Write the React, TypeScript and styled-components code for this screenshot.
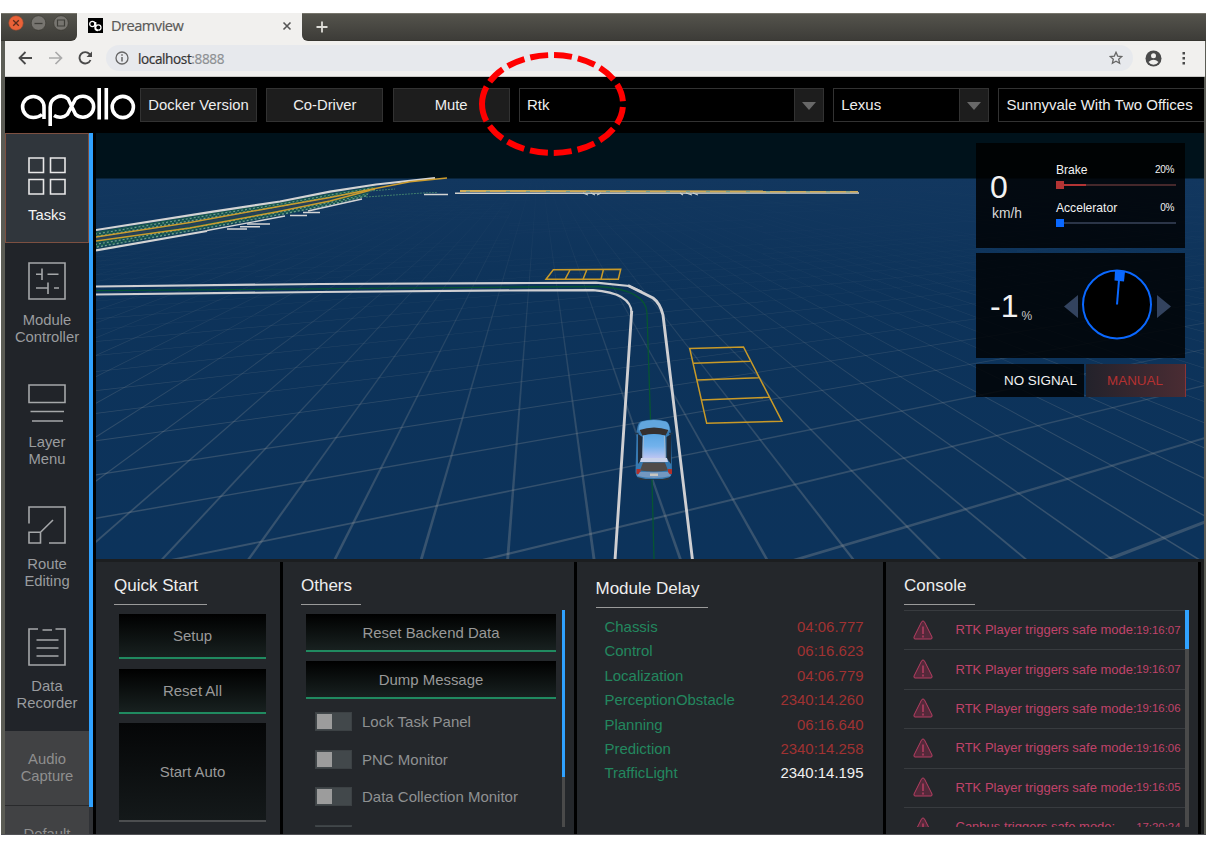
import React from 'react';
import styled, { createGlobalStyle, css } from 'styled-components';

const Global = createGlobalStyle`
  * { box-sizing: border-box; }
  body { margin: 0; background: #fff; font-family: 'Liberation Sans', Arial, sans-serif; }
`;

/* ---------- window frame ---------- */
const Page = styled.div`
  position: relative; width: 1206px; height: 845px; padding: 13px 0 0 1px; overflow: hidden; background: #fff;
`;
const Window = styled.div`
  width: 1205px; height: 822px; display: flex; flex-direction: column; overflow: hidden;
  background: #5b5c55; border-bottom: 1px solid #515256;
`;
const TitleBar = styled.div`
  height: 28px; flex: none; display: flex; background: #f1f0ee;
`;
const darkBar = css`
  background: linear-gradient(#54534c, #3d3c38); border-top: 1px solid #77756c; border-bottom: 1px solid #35342f;
`;
const WindowControls = styled.div`
  ${darkBar} width: 76px; padding: 1px 0 0 7px; display: flex; gap: 7px; border-bottom-right-radius: 6px;
`;
const TitleRest = styled.div`
  ${darkBar} flex: 1; padding: 5px 0 0 14px; border-bottom-left-radius: 6px;
`;
const BrowserTab = styled.div`
  width: 225px; display: flex; align-items: center; padding: 0 10px 3px 11px; background: #f1f0ee;
  font: 14.6px 'Open Sans', 'Noto Sans', sans-serif; color: #5a5a58;
`;
const TabName = styled.span`flex: 1; padding-left: 8px; margin-top: -2px; letter-spacing: -0.5px; -webkit-text-stroke: .2px #5a5a58;`;
const AddressRow = styled.div`
  height: 36px; flex: none; display: flex; align-items: center; margin: 0 1px 0 4px; background: #f1f0ee;
  border-bottom: 1px solid #c9c8c5; padding: 0 0 1px 13px;
`;
const NavIcons = styled.div`display: flex; gap: 15px; width: 88px;`;
const UrlBox = styled.div`
  width: 1027px; height: 26px; border-radius: 13px; background: #e7e9ed; display: flex; align-items: center;
  padding: 0 10px 0 9px; font: 13.6px 'Open Sans', 'Noto Sans', sans-serif; color: #333; letter-spacing: -0.4px;
`;
const Url = styled.span`flex: 1; padding-left: 9px; -webkit-text-stroke: .2px; span { color: #8d9093; }`;
const ChromeIcons = styled.div`display: flex; align-items: center; gap: 13px; padding-left: 12px;`;

/* ---------- header ---------- */
const Dream = styled.div`
  flex: 1; min-height: 0; margin: 0 2px 0 4px; display: flex; flex-direction: column; background: #000; overflow: hidden;
`;
const Header = styled.header`
  height: 56px; flex: none; display: flex; align-items: center; overflow: hidden; padding-left: 15px;
  > svg { flex: none; }
`;
const HeaderItems = styled.div`display: flex; gap: 9.300px; flex: none;`;
const HeaderButton = styled.button`
  width: 117px; height: 34px; flex: none; padding: 0; border: 1px solid #323232; background: #1d1d1d; color: #eee;
  font: 14.8px 'Liberation Sans', sans-serif;
`;
const Select = styled.div<{ $w: number }>`
  width: ${p => p.$w}px; height: 34px; flex: none; display: flex; align-items: center; justify-content: space-between;
  border: 1px solid #323232; padding: 0 0 1px 7px; color: #eee; font-size: 15px; white-space: nowrap;
`;
const SelectArrow = styled.div`
  width: 29px; height: 32px; margin-bottom: -1px; background: #1d1d1d; border-left: 1px solid #323232; display: grid; place-items: center;
  &::after { content: ''; border: 7px solid transparent; border-top: 8px solid #686868; border-bottom: 0; margin-top: 2px; }
`;

/* ---------- sidebar ---------- */
const Body = styled.div`flex: 1; min-height: 0; display: flex;`;
const Sidebar = styled.nav`width: 84px; flex: none; overflow: hidden; background: #212429; display: flex; flex-direction: column;`;
const SideItem = styled.div<{ $active?: boolean }>`
  height: ${p => (p.$active ? 110 : 122)}px; flex: none; padding-top: ${p => (p.$active ? 23 : 19)}px;
  display: flex; flex-direction: column; align-items: center; gap: 12px; text-align: center;
  color: ${p => (p.$active ? '#f4f4f4' : '#9a9c9f')}; font-size: 14.8px; line-height: 17px;
  ${p => p.$active && css`background: #30363c; border: 1px solid #7d5041;`}
  svg { flex: none; stroke: ${p => (p.$active ? '#e8e8e8' : '#a5a7a9')}; }
  span { width: 76px; }
`;
const SideMode = styled.div`
  height: 75px; flex: none; background: #414244; border-bottom: 1px solid #292a2c; color: #8f8f8f; font-size: 14.8px; line-height: 17px;
  display: flex; align-items: center; justify-content: center; text-align: center;
  span { width: 60px; }
`;
const SideMore = styled(SideMode)`align-items: flex-start; padding-top: 20px; border: 0;`;
const Track = styled.div<{ $w: number; $fill: number; $bg: string }>`
  width: ${p => p.$w}px; flex: none;
  background: linear-gradient(#30a2ff, #30a2ff) no-repeat 0 0 / 100% ${p => p.$fill}px ${p => p.$bg};
`;

/* ---------- main ---------- */
const Main = styled.main`width: 1108px; margin-left: 3px; flex: none; display: flex; flex-direction: column;`;
const Scene = styled.section`position: relative; height: 426px; flex: none; svg { display: block; }`;
const Hud = styled.div`
  position: absolute; left: 880px; top: 10px; width: 210px; display: flex; flex-direction: column; gap: 5.500px; color: #f2f2f2;
`;
const Meter = styled.div`width: 209px; height: 104.800px; background: rgba(0, 0, 0, .82); display: flex;`;
const Speed = styled.div`width: 80px; padding: 26px 0 0 14px; font-size: 32px; line-height: 36px;
  small { display: block; font-size: 13.8px; line-height: 18px; padding-left: 2px; color: #d8d8d8; }`;
const Pedals = styled.div`width: 120px; padding-top: 20px; display: flex; flex-direction: column; gap: 6.500px;`;
const Pedal = styled.div`height: 31px; font-size: 12.1px; line-height: 14px;`;
const PedalText = styled.div`display: flex; justify-content: space-between; padding-right: 2px; small { font-size: 10px; letter-spacing: -.3px; }`;
const PedalBar = styled.div<{ $c: string; $dim: string; $fill: number }>`
  height: 8px; margin-top: 4px; display: flex; align-items: center;
  background: linear-gradient(90deg, ${p => p.$c} ${p => p.$fill}px, ${p => p.$dim} ${p => p.$fill}px) no-repeat 0 3px / 100% 2px;
  &::before { content: ''; width: 8px; height: 8px; background: ${p => p.$c}; }
`;
const Steering = styled.div`
  width: 88px; padding: 35px 0 0 14px; font-size: 32px; line-height: 36px; white-space: nowrap; display: flex; gap: 3px;
  small { font-size: 12px; padding-top: 10px; color: #c8c8c8; }
`;
const States = styled.div`display: flex; gap: 2px; height: 33px; font-size: 13.4px; line-height: 34px;`;
const Signal = styled.div`width: 108px; background: rgba(0, 0, 0, .82); text-align: right; padding-right: 7px;`;
const Mode = styled.div`
  width: 100px; color: #b43131; text-align: center; padding-right: 1px; border-right: 1px solid #8a3437;
  background: linear-gradient(90deg, #23222b, #4a2c33);
`;

const Panels = styled.div`flex: 1; min-height: 0; display: flex; gap: 3px; border-top: 3px solid #1c1e20; background: #000;`;
const Panel = styled.section<{ $w: number; $pt?: number; $pl?: number }>`
  width: ${p => p.$w}px; flex: none; background: #24272b; padding: ${p => p.$pt ?? 11}px 0 0 ${p => p.$pl ?? 18}px; overflow: hidden;
`;
const Gutter = styled.div`flex: 1; background: #1d1e1f;`;
const PanelTitle = styled.h2`
  margin: 0; width: max-content; height: 32px; padding-right: 9px; border-bottom: 1px solid #9a9a9a;
  font-size: 17px; font-weight: 400; line-height: 25px; color: #eee;
`;
const Command = styled.button<{ $w: number; $h: number; $off?: boolean }>`
  display: block; width: ${p => p.$w}px; height: ${p => p.$h}px; margin: 0 0 9px; padding: 0; border: 0;
  border-bottom: 2px solid ${p => (p.$off ? '#4c4e50' : '#208a60')};
  background: ${p => (p.$off ? 'linear-gradient(#050607, #14191a)' : 'linear-gradient(#000, #182120)')};
  color: #999; font: 14.95px 'Liberation Sans', sans-serif;
`;
const QuickList = styled.div`padding: 9px 0 0 5px; button { margin-bottom: 9.5px; }`;
const ScrollArea = styled.div`display: flex; height: 217px; margin-top: 5px; overflow: hidden;`;
const OtherList = styled.div`width: 261px; padding: 4px 0 0 5px;`;
const Toggles = styled.div`margin-top: -5px;`;
const Toggle = styled.div`
  display: flex; align-items: center; gap: 10px; height: 37.500px; padding-left: 9px; font-size: 15px; color: #8f9192;
  &::before {
    content: ''; width: 35px; height: 17px; flex: none; border: 1px solid #3c4144;
    background: linear-gradient(#9c9c9c, #9c9c9c) no-repeat 1px 1px / 15px 15px #42484b;
  }
`;
const DelayList = styled.div`padding: 7px 0 0 9px; width: 268px;`;
const Delay = styled.div<{ $white?: boolean }>`
  display: flex; justify-content: space-between; height: 24.4px; line-height: 24.4px; font-size: 14.95px; color: #23875f;
  b { font-weight: 400; color: ${p => (p.$white ? '#f0f0f0' : '#a03232')}; }
`;
const LogList = styled.div`width: 281px;`;
const LogRow = styled.div`
  height: 39.400px; border-top: 1px solid #383b3f; display: flex; align-items: center; padding: 0 4.500px 1px 9px; color: #c0436a;
  font-size: 13px; white-space: nowrap;
  span { width: 179px; margin-left: 22.500px; }
  time { flex: 1; font-size: 11.4px; display: flex; justify-content: flex-end; }
`;
const Marker = styled.svg`position: absolute; left: 470px; top: 44px;`;

/* ---------- drawings ---------- */
const Logo = () => (
  <svg width="120" height="44" viewBox="20 84 120 44" fill="none" stroke="#fff" strokeWidth="3.6">
    <path d="M44 120V108A10.700 10.500 0 1 0 33.300 118.500Q38.500 118.500 42 115.500" />
    <path d="M50.2 127V108A10.8 10.5 0 0 1 68 99.8L75.5 115.4A10.8 10.5 0 1 0 75.5 100L67.5 115.2A10.8 10.5 0 0 1 54 116.5" />
    <path d="M99.2 89V120.5M106.3 89V120.5" />
    <circle cx="122.8" cy="108" r="10.6" />
  </svg>
);

const sideIcons: Record<string, React.ReactNode> = {
  tasks: <path d="M1 1h14.5v14.5H1zM22.5 1H37v14.5H22.5zM1 22.500h14.500V37H1zM22.500 22.500H37V37H22.500z" />,
  module: <path d="M1 1h36v36H1zM8 12.200h6M14 6.500v11.500M19.500 12.200h11M8 26h12M20 20.500v11.500M26 26h5" />,
  layer: <path d="M1 1h36v17.500H1zM2.500 27.500h33.500M4 37h31" />,
  route: <path d="M1 17.500V1h36v36H21M1 26.200h11.500V37H1zM12.500 26.200L25 14" />,
  data: <path d="M10 1H1v36h36V1h-9.500M14.500 2h9.500M8.500 12h22M8.500 20h22M8.500 28h22" />,
};
const SideIcon = ({ name }: { name: string }) => (
  <svg width="38" height="38" viewBox="0 0 38 38" fill="none" strokeWidth="1.600">{sideIcons[name]}</svg>
);

const HORIZON = 155.5;
const BOTTOM = 560;
const across = (c: number) => 539 + c * (BOTTOM - HORIZON);
const Grid = () => {
  const half = 0.0036;
  const lines: string[] = [];
  for (let n = -60; n <= 60; n++) {
    const c = -0.0776 + n * 0.2139;
    lines.push(`539,${HORIZON} ${across(c - half)},${BOTTOM} ${across(c + half)},${BOTTOM}`);
  }
  for (let m = -45; m <= 8; m++) {
    const at = (x: number) => HORIZON + (403.5 / (2155 - x)) * (2155 - 90);
    const x = -135 + 311 * m;
    lines.push(`2155,${HORIZON} 90,${at(x - 4.800)} 90,${at(x + 4.800)}`);
  }
  return <g fill="url(#haze)">{lines.map((p, i) => <polygon key={i} points={p} />)}</g>;
};

const Car = () => (
  <g>
    <path d="M636.500 436q0-12 4-14.500q13-4 26 0q4 2.500 4.500 14.500l1 36q-1 6-6 7h-25q-5-1-5.500-7z" fill="#3779b0" />
    <path d="M638.500 430q0-7 4-8.500q11-3 23 0q4 1.500 4 8.500l-2 2q-13.500-5-27 0z" fill="#62a6de" />
    <path d="M634.500 433.500h4M669 433.500h4" stroke="#1f364d" strokeWidth="1.500" />
    <path d="M639.500 430q14.500-5 29 0l-3 5.500q-11-3-23 0z" fill="#35302f" />
    <path d="M638 434l4.500 3v21l-4.500 6zM671 434l-4.500 3v21l4.500 6z" fill="#202a38" />
    <path d="M643 435.500q11-3 22 0l.5 23h-23z" fill="url(#roof)" />
    <path d="M643.500 436l-.8 22M664.500 436l.8 22" stroke="#b0b9c6" strokeWidth=".8" />
    <path d="M641 458h26l1 4h-28z" fill="#c9d2ea" />
    <path d="M643 462.500h22l3 8q-14 2-28 0z" fill="#504b49" />
    <path d="M636.500 469h4v5h-4zM668 469h4v5h-4z" fill="#b1302b" />
    <path d="M640 472h28l3 4q-17 4-34 0z" fill="#7397c0" />
    <path d="M650 473.500h8v2.500h-8z" fill="#c9c6c0" />
    <path d="M637 477q17 5 34 0l-3 3h-28z" fill="#29333d" />
  </g>
);

const lanes = [0.1, 0.17, 0.24, 0.31, 0.66, 0.74, 0.82, 0.9];
const topEdge = [[96, 231], [213, 212], [280, 202], [330, 193], [376, 186]];
const lowEdge = [[96, 249], [213, 228.5], [285, 215], [330, 206], [365, 197]];
const lane = (t: number) =>
  topEdge.map(([x, y], i) => `${x + (lowEdge[i][0] - x) * t},${y + (lowEdge[i][1] - y) * t}`).join(' ');
const roadSurface = [...topEdge, ...[...lowEdge].reverse()].map(p => p.join(',')).join(' ');

const World = () => (
  <svg width="1108" height="426" viewBox="96 133 1108 426">
    <defs>
      <linearGradient id="ground" x1="0" x2="0" y1="0" y2="1">
        <stop offset="0" stopColor="#12375f" /><stop offset=".3" stopColor="#0d335a" /><stop offset="1" stopColor="#0c335b" />
      </linearGradient>
      <linearGradient id="haze" gradientUnits="userSpaceOnUse" x1="0" x2="0" y1="178" y2="560">
        <stop offset="0" stopColor="#94989a" stopOpacity=".02" />
        <stop offset=".15" stopColor="#94989a" stopOpacity=".06" />
        <stop offset=".35" stopColor="#94989a" stopOpacity=".16" />
        <stop offset=".65" stopColor="#94989a" stopOpacity=".26" />
        <stop offset="1" stopColor="#94989a" stopOpacity=".33" />
      </linearGradient>
      <linearGradient id="roof" x1="0" x2="0" y1="0" y2="1">
        <stop offset="0" stopColor="#5aa5e2" /><stop offset=".5" stopColor="#72b2ec" /><stop offset="1" stopColor="#c0c6f2" />
      </linearGradient>
      <clipPath id="land"><path d="M96 178.500H1204V559H96z" /></clipPath>
    </defs>
    <path d="M96 133H1204V179H96z" fill="#00121b" />
    <path d="M96 178.500H1204V559H96z" fill="url(#ground)" />
    <g clipPath="url(#land)"><Grid /></g>

    <g fill="none">
      <polygon points={roadSurface} fill="#1b5f55" fillOpacity=".4" />
      {lanes.map((t, i) => (
        <polyline key={t} points={lane(t)} stroke={i % 2 ? '#6d9f8c' : '#1a6149'} strokeWidth="1.300"
          strokeDasharray={i % 2 ? '2 2' : '4 1.500'} strokeDashoffset={i} />
      ))}
      <g stroke="#d4d4d4" strokeWidth="2.200">
        <path d="M96 230L213 211.700L280 201.500L330 191.700L376 184.500L435 178" />
        <path d="M96 250.300L207 231" />
        <path d="M207 230.500L285 216M308 211L362 199" strokeWidth="1.400" />
        <path d="M247 224h23M240 226.700h20M227 229h20M290 215.500h17M303 212.500h17M424 194.500h24" strokeWidth="1.500" />
      </g>
      <path d="M96 239L190 225.200L276 209.300L330 199" stroke="#2a3f57" strokeWidth="2" />
      <g stroke="#cc9c2e" strokeWidth="1.500">
        <path d="M96 237L190 222.500L276 207L330 197.500L370 189.500L410 181.700L447 178" />
        <path d="M96 241L190 228L276 212L330 201L375 189" />
      </g>
      <path d="M366 197L423 193L437 192.500M370 191L395 189" stroke="#3f7d6d" strokeDasharray="2 1" />
      <path d="M455 193.300L859 193" stroke="#d0d0cc" strokeWidth="1.600" />
      <path d="M460 191L858 191.500" stroke="#d0ac58" strokeWidth="2" />
      <path d="M466 191.300L850 191.800" stroke="#69a39a" strokeDasharray="4 16" />
      <path d="M583 193l5 2M591 193l4 2M597 195l4-2M680 193l3 2M686 193l6 2M693 193l5 2" stroke="#ccd3d0" strokeWidth="1.300" />

      <path d="M96 290.700L530 287L600 286.500Q646 290 647 313L650.500 420L652 480L654 559" stroke="#075532" strokeWidth="1.300" />
      <g stroke="#cfcfd2" strokeWidth="2.200">
        <path d="M96 286.500L320 284L530 283L596 282.700L629 286L642 292" />
        <path d="M96 294.500L320 292L530 290.300L593 290.200Q631 293 631.700 313" />
        <path d="M628 285.500L653 298Q660 303 663 315L692.500 560M631.700 311L615 560" strokeWidth="2.900" />
      </g>
      <g stroke="#c99a28" strokeWidth="1.500">
        <path d="M689.700 348.500L743.500 347L782 421.300L706.700 423.300zM693.500 363.300L750 361.300M697 380L758.700 377.700M701 400L769 397.300" />
        <path d="M546 279.300L553.300 269.700L620.700 269.300L618.300 279.300zM565 279.300L570 270M583 279.300L586.700 270M601 279.300L603.300 270" />
      </g>
    </g>
    <Car />
  </svg>
);

const Wheel = () => (
  <svg width="110" height="105" viewBox="0 0 110 105">
    <path d="M0 53.500L14 42v23zM107 53.500L93 42v23z" fill="#33435f" />
    <circle cx="53" cy="51.500" r="34" fill="#000" stroke="#0a68ff" strokeWidth="2" />
    <path d="M53 51.500L55 27" stroke="#0a68ff" strokeWidth="2" />
    <path d="M51 17.500l10 1-1 10-9.500-1z" fill="#0a68ff" />
  </svg>
);

const Warning = () => (
  <svg width="20" height="20" viewBox="0 0 20 20" fill="none" stroke="#b53e62" strokeWidth="1">
    <path d="M10 1q1 0 1.500 1l7.500 15q.5 2-1 2H2q-1.500 0-1-2L8.500 2Q9 1 10 1z" fill="#54293a" />
    <path d="M10 6.500V14M10 15.500v2" strokeWidth="1.500" />
  </svg>
);

const delays = [
  ['Chassis', '04:06.777'], ['Control', '06:16.623'], ['Localization', '04:06.779'], ['PerceptionObstacle', '2340:14.260'],
  ['Planning', '06:16.640'], ['Prediction', '2340:14.258'], ['TrafficLight', '2340:14.195'],
];
const logs = [
  ['RTK Player triggers safe mode:', '19:16:07'], ['RTK Player triggers safe mode:', '19:16:07'],
  ['RTK Player triggers safe mode:', '19:16:06'], ['RTK Player triggers safe mode:', '19:16:06'],
  ['RTK Player triggers safe mode:', '19:16:05'], ['Canbus triggers safe mode:', '17:20:24'],
];

export default function App() {
  return (
    <Page>
      <Global />
      <Window>
        <TitleBar>
          <WindowControls>
            <svg width="62" height="16" viewBox="0 0 62 16" fill="none">
              <circle cx="8" cy="8" r="7.300" fill="#ea6238" stroke="#8f4931" strokeWidth=".6" />
              <path d="M5.200 5.200l5.600 5.600M10.800 5.200l-5.600 5.600" stroke="#5c2c1c" strokeWidth="1.300" />
              <circle cx="30.500" cy="8" r="7.300" fill="#777570" stroke="#37362f" strokeWidth=".6" />
              <path d="M26.500 8.500h8" stroke="#3f3e39" strokeWidth="1.300" />
              <circle cx="53" cy="8" r="7.300" fill="#777570" stroke="#37362f" strokeWidth=".6" />
              <path d="M49.500 5h7v6h-7z" stroke="#3f3e39" strokeWidth="1.200" />
            </svg>
          </WindowControls>
          <BrowserTab>
            <svg width="15" height="15" viewBox="0 0 15 15" fill="none" stroke="#fff" strokeWidth="1.300">
              <path d="M0 0h15v15H0z" fill="#000" stroke="none" />
              <circle cx="4.300" cy="6" r="2.600" /><path d="M7 4v6q0 2.500 3 2.500" /><circle cx="10.300" cy="9.500" r="2.700" /><path d="M7.700 4v5" />
            </svg>
            <TabName>Dreamview</TabName>
            <svg width="10" height="10" viewBox="0 0 10 10" stroke="#555" strokeWidth="1.600"><path d="M1.500 1.500l7 7M8.500 1.500l-7 7" /></svg>
          </BrowserTab>
          <TitleRest>
            <svg width="12" height="12" viewBox="0 0 12 12" stroke="#deddd8" strokeWidth="1.800"><path d="M6 .5v11M.5 6h11" /></svg>
          </TitleRest>
        </TitleBar>

        <AddressRow>
          <NavIcons>
            <svg width="15" height="14" viewBox="0 0 15 14" fill="none" stroke="#4a4a4a" strokeWidth="1.800"><path d="M14 7H2M7.500 1L1.500 7l6 6" /></svg>
            <svg width="15" height="14" viewBox="0 0 15 14" fill="none" stroke="#aaa" strokeWidth="1.700"><path d="M1 7h12M7.500 1l6 6-6 6" /></svg>
            <svg width="15" height="14" viewBox="0 0 15 14" fill="none" stroke="#4a4a4a" strokeWidth="1.900">
              <path d="M12.500 9A5.700 5.700 0 1 1 11.500 3L13 5" /><path d="M14 .5V6H8.500z" fill="#4a4a4a" stroke="none" />
            </svg>
          </NavIcons>
          <UrlBox>
            <svg width="14" height="14" viewBox="0 0 14 14" fill="none" stroke="#666" strokeWidth="1.300"><circle cx="7" cy="7" r="6" /><path d="M7 6v4.500M7 3.300v1.500" strokeWidth="1.500" /></svg>
            <Url>localhost<span>:8888</span></Url>
            <svg width="14" height="14" viewBox="0 0 14 14" fill="none" stroke="#666" strokeWidth="1.300"><path d="M7 1.300l1.700 3.800 4.100.4-3.100 2.700.9 4.100L7 10.200l-3.600 2.100.9-4.100-3.100-2.700 4.100-.4z" /></svg>
          </UrlBox>
          <ChromeIcons>
            <svg width="17" height="17" viewBox="0 0 17 17"><circle cx="8.500" cy="8.500" r="8" fill="#4a4a4a" /><circle cx="8.500" cy="5.800" r="2.500" fill="#f1f0ee" /><path d="M3.500 12q5-4.500 10 0-2 2.800-5 2.800t-5-2.800z" fill="#f1f0ee" /></svg>
            <svg width="17" height="14" viewBox="0 0 17 14" fill="#4a4a4a"><path d="M7.500 1h2.500v2.500H7.500zM7.500 6h2.500v2.500H7.500zM7.500 11h2.500v2.500H7.500z" /></svg>
          </ChromeIcons>
        </AddressRow>

        <Dream>
          <Header>
            <Logo />
            <HeaderItems>
              <HeaderButton>Docker Version</HeaderButton>
              <HeaderButton>Co-Driver</HeaderButton>
              <HeaderButton>Mute</HeaderButton>
              <Select $w={305}>Rtk<SelectArrow /></Select>
              <Select $w={156}>Lexus<SelectArrow /></Select>
              <Select $w={305}>Sunnyvale With Two Offices<SelectArrow /></Select>
            </HeaderItems>
          </Header>

          <Body>
            <Sidebar>
              <SideItem $active><SideIcon name="tasks" /><span>Tasks</span></SideItem>
              <SideItem><SideIcon name="module" /><span>Module Controller</span></SideItem>
              <SideItem><SideIcon name="layer" /><span>Layer<br />Menu</span></SideItem>
              <SideItem><SideIcon name="route" /><span>Route<br />Editing</span></SideItem>
              <SideItem><SideIcon name="data" /><span>Data Recorder</span></SideItem>
              <SideMode><span>Audio Capture</span></SideMode>
              <SideMore><span>Default</span></SideMore>
            </Sidebar>
            <Track $w={4} $fill={674} $bg="#303236" />
            <Main>
              <Scene>
                <World />
                <Hud>
                  <Meter>
                    <Speed>0<small>km/h</small></Speed>
                    <Pedals>
                      <Pedal><PedalText>Brake<small>20%</small></PedalText><PedalBar $c="#b33434" $dim="#45282b" $fill={30} /></Pedal>
                      <Pedal><PedalText>Accelerator<small>0%</small></PedalText><PedalBar $c="#0a68ff" $dim="#2b3548" $fill={0} /></Pedal>
                    </Pedals>
                  </Meter>
                  <Meter><Steering>-1<small>%</small></Steering><Wheel /></Meter>
                  <States><Signal>NO SIGNAL</Signal><Mode>MANUAL</Mode></States>
                </Hud>
              </Scene>
              <Panels>
                <Panel $w={184}>
                  <PanelTitle>Quick Start</PanelTitle>
                  <QuickList>
                    <Command $w={147} $h={45}>Setup</Command>
                    <Command $w={147} $h={45}>Reset All</Command>
                    <Command $w={147} $h={99} $off>Start Auto</Command>
                  </QuickList>
                </Panel>
                <Panel $w={291}>
                  <PanelTitle>Others</PanelTitle>
                  <ScrollArea>
                    <OtherList>
                      <Command $w={250} $h={38}>Reset Backend Data</Command>
                      <Command $w={250} $h={38}>Dump Message</Command>
                      <Toggles>
                        <Toggle>Lock Task Panel</Toggle>
                        <Toggle>PNC Monitor</Toggle>
                        <Toggle>Data Collection Monitor</Toggle>
                        <Toggle />
                      </Toggles>
                    </OtherList>
                    <Track $w={3} $fill={167} $bg="#4a4a4a" />
                  </ScrollArea>
                </Panel>
                <Panel $w={306} $pt={14} $pl={18.5}>
                  <PanelTitle>Module Delay</PanelTitle>
                  <DelayList>
                    {delays.map(([name, value], i) => <Delay key={name} $white={i === 6}>{name}<b>{value}</b></Delay>)}
                  </DelayList>
                </Panel>
                <Panel $w={312}>
                  <PanelTitle>Console</PanelTitle>
                  <ScrollArea>
                    <LogList>
                      {logs.map(([text, time], i) => <LogRow key={i}><Warning /><span>{text}</span><time>{time}</time></LogRow>)}
                    </LogList>
                    <Track $w={4} $fill={39} $bg="#4a4a4a" />
                  </ScrollArea>
                </Panel>
                <Gutter />
              </Panels>
            </Main>
          </Body>
        </Dream>
      </Window>
      <Marker width="165" height="120" viewBox="470 44 165 120">
        <path d="M482 104A70.500 49 0 0 1 623 104A70.500 49 0 0 1 482 104" fill="none" stroke="#f00" strokeWidth="6" strokeDasharray="18 6" />
      </Marker>
    </Page>
  );
}
